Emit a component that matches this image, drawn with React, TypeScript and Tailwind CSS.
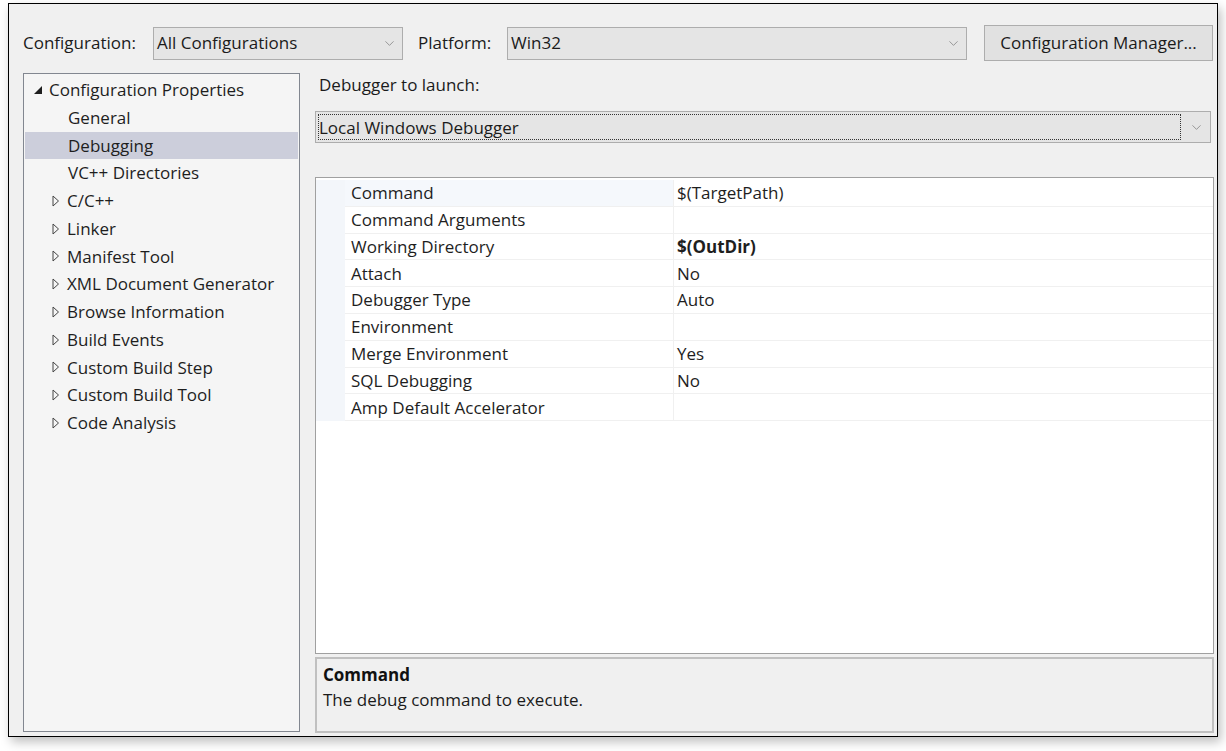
import { ChevronDown } from "lucide-react";

const font = "font-['Segoe_UI','Open_Sans','Noto_Sans',sans-serif]";

type TreeItem = { label: string; level: 0 | 1; expander?: "open" | "closed"; selected?: boolean };

const tree: TreeItem[] = [
  { label: "Configuration Properties", level: 0, expander: "open" },
  { label: "General", level: 1 },
  { label: "Debugging", level: 1, selected: true },
  { label: "VC++ Directories", level: 1 },
  { label: "C/C++", level: 1, expander: "closed" },
  { label: "Linker", level: 1, expander: "closed" },
  { label: "Manifest Tool", level: 1, expander: "closed" },
  { label: "XML Document Generator", level: 1, expander: "closed" },
  { label: "Browse Information", level: 1, expander: "closed" },
  { label: "Build Events", level: 1, expander: "closed" },
  { label: "Custom Build Step", level: 1, expander: "closed" },
  { label: "Custom Build Tool", level: 1, expander: "closed" },
  { label: "Code Analysis", level: 1, expander: "closed" },
];

const props: { name: string; value: string; bold?: boolean }[] = [
  { name: "Command", value: "$(TargetPath)" },
  { name: "Command Arguments", value: "" },
  { name: "Working Directory", value: "$(OutDir)", bold: true },
  { name: "Attach", value: "No" },
  { name: "Debugger Type", value: "Auto" },
  { name: "Environment", value: "" },
  { name: "Merge Environment", value: "Yes" },
  { name: "SQL Debugging", value: "No" },
  { name: "Amp Default Accelerator", value: "" },
];

function Expander({ kind }: { kind?: "open" | "closed" }) {
  if (kind === "open")
    return (
      <svg width="10" height="10" viewBox="0 0 10 10" className="shrink-0">
        <path d="M9 1 L9 9 L1 9 Z" fill="#1e1e1e" />
      </svg>
    );
  if (kind === "closed")
    return (
      <svg width="8" height="12" viewBox="0 0 8 12" className="shrink-0">
        <path d="M1 1 L6.5 6 L1 11 Z" fill="none" stroke="#444" strokeWidth="1" />
      </svg>
    );
  return <span className="w-[8px] shrink-0" />;
}

function Combo({ value, width }: { value: string; width: string }) {
  return (
    <div
      className={`${width} h-[33px] flex items-center justify-between bg-[#e5e5e5] border border-[#adadad] pl-[3px] pr-[5px]`}
    >
      <span className="text-[17px] text-[#1b1b1b]">{value}</span>
      <ChevronDown size={15} strokeWidth={1} color="#666" />
    </div>
  );
}

export default function App() {
  return (
    <div className={`w-[1226px] h-[751px] bg-white pt-[3px] pl-[8px] ${font}`}>
      <div className="w-[1210px] h-[734px] border border-black bg-[#f0f0f0] shadow-[3px_5px_10px_rgba(0,0,0,0.25)] flex flex-col">
        {/* top bar */}
        <div className="flex items-center h-[36px] mt-[21px] pl-[14px]">
          <span className="w-[130px] text-[17px] text-[#1b1b1b]">Configuration:</span>
          <Combo value="All Configurations" width="w-[250px]" />
          <span className="ml-[15px] w-[89px] text-[17px] text-[#1b1b1b]">Platform:</span>
          <Combo value="Win32" width="w-[460px]" />
          <button className="ml-[17px] w-[229px] h-[36px] bg-[#e1e1e1] border border-[#adadad] text-[17px] text-[#1b1b1b]">
            Configuration Manager...
          </button>
        </div>

        <div className="flex mt-[12px] pl-[14px]">
          {/* tree */}
          <div className="w-[277px] h-[659px] border border-[#828790] bg-[#f5f5f5] pt-[2px] px-[1px]">
            {tree.map((t) => (
              <div
                key={t.label}
                className={`h-[27.75px] flex items-center ${t.level === 0 ? "pl-[8px] gap-[6px]" : "pl-[27px] gap-[7px]"} ${
                  t.selected ? "bg-[#cccedb]" : ""
                }`}
              >
                <Expander kind={t.expander} />
                <span className={`text-[17px] text-[#1e1e1e] whitespace-nowrap ${t.level === 1 && !t.expander ? "ml-[1px]" : ""}`}>
                  {t.label}
                </span>
              </div>
            ))}
          </div>

          {/* right side */}
          <div className="ml-[15px] w-[899px] flex flex-col">
            <div className="pt-[2px] pl-[4px] h-[22px] leading-[20px] text-[17px] text-[#1b1b1b]">Debugger to launch:</div>
            <div className="mt-[16px] w-[896px] h-[32px] flex bg-[#e5e5e5] border border-[#adadad]">
              <div className="flex-1 m-[2px] border border-dotted border-[#333] flex items-center">
                <span className="text-[17px] text-[#1b1b1b] pt-[1px]">Local Windows Debugger</span>
              </div>
              <div className="w-[27px] flex items-center justify-center">
                <ChevronDown size={15} strokeWidth={1} color="#666" />
              </div>
            </div>

            {/* property grid */}
            <div className="mt-[34px] h-[477px] border border-[#a0a0a0] bg-white pt-[2px]">
              {props.map((p, i) => (
                <div key={p.name} className="flex h-[26.8px]">
                  <div className="w-[29px] bg-[#f3f6fa]" />
                  <div
                    className={`w-[328px] flex items-center pl-[6px] border-b border-[#f0f0f0] ${
                      i === 0 ? "bg-[#f5f8fc]" : ""
                    } text-[17px] text-[#1e1e1e]`}
                  >
                    {p.name}
                  </div>
                  <div
                    className={`flex-1 flex items-center pl-[3px] border-b border-l border-[#f0f0f0] text-[17px] text-[#1e1e1e] ${
                      p.bold ? "font-bold" : ""
                    }`}
                  >
                    {p.value}
                  </div>
                </div>
              ))}
            </div>

            {/* description */}
            <div className="mt-[3px] h-[76px] border-2 border-[#c0c0c0] bg-[#f0f0f0] pl-[6px] pt-[4px]">
              <div className="text-[17px] font-bold text-[#111] leading-[24px]">Command</div>
              <div className="text-[17px] text-[#1b1b1b] leading-[26px]">The debug command to execute.</div>
            </div>
          </div>
        </div>
      </div>
    </div>
  );
}
